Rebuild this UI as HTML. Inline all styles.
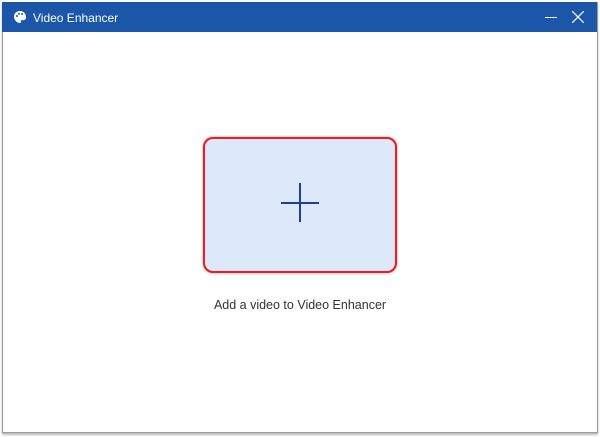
<!DOCTYPE html><html><head><style>
body{margin:0;width:600px;height:437px;background:#fff;position:relative;overflow:hidden;font-family:"Liberation Sans",sans-serif}
.win{position:absolute;left:2px;top:2px;width:594px;height:430px;border:1px solid #9a9a9a;border-top:none;background:#fff;box-shadow:0 2px 2px #bbb}
.tb{position:absolute;left:2px;top:2px;width:595px;height:30px;background:#1b56a9}
.t{position:absolute;left:31px;top:9px;color:#fff;font-size:12px}
.box{position:absolute;left:203px;top:137px;width:190px;height:132px;border:2px solid #ee1c1c;border-radius:10px;background:#dde9fb;box-shadow:0 0 2px #999}
.cap{position:absolute;left:0;width:600px;top:298px;text-align:center;font-size:12.5px;color:#333}
</style></head><body>
<div class="win"></div>
<div class="tb">
<svg style="position:absolute;left:11px;top:8px" width="14" height="14" viewBox="0 0 14 14"><path d="M7 1C3.5 1 1 3.5 1 6.5 1 10 4 13 7 13c1 0 1.2-.8.8-1.4-.4-.6-.2-1.4.6-1.4H10c2 0 3-1.3 3-3C13 3.5 10.5 1 7 1z" fill="#fff"/><circle cx="4" cy="6" r="1" fill="#1b56a9"/><circle cx="6" cy="3.8" r="1" fill="#1b56a9"/><circle cx="9" cy="4" r="1" fill="#1b56a9"/></svg>
<div class="t">Video Enhancer</div>
<div style="position:absolute;left:543px;top:15px;width:12px;height:1px;background:#fff"></div>
<svg style="position:absolute;left:570px;top:9px" width="12" height="12"><path d="M0 0L12 12M12 0L0 12" stroke="#fff" stroke-width="1.2"/></svg>
</div>
<div class="box"></div>
<div style="position:absolute;left:281px;top:202px;width:38px;height:1.5px;background:#1c3f9a"></div>
<div style="position:absolute;left:299px;top:183px;width:1.5px;height:39px;background:#1c3f9a"></div>
<div class="cap">Add a video to Video Enhancer</div>
</body></html>
